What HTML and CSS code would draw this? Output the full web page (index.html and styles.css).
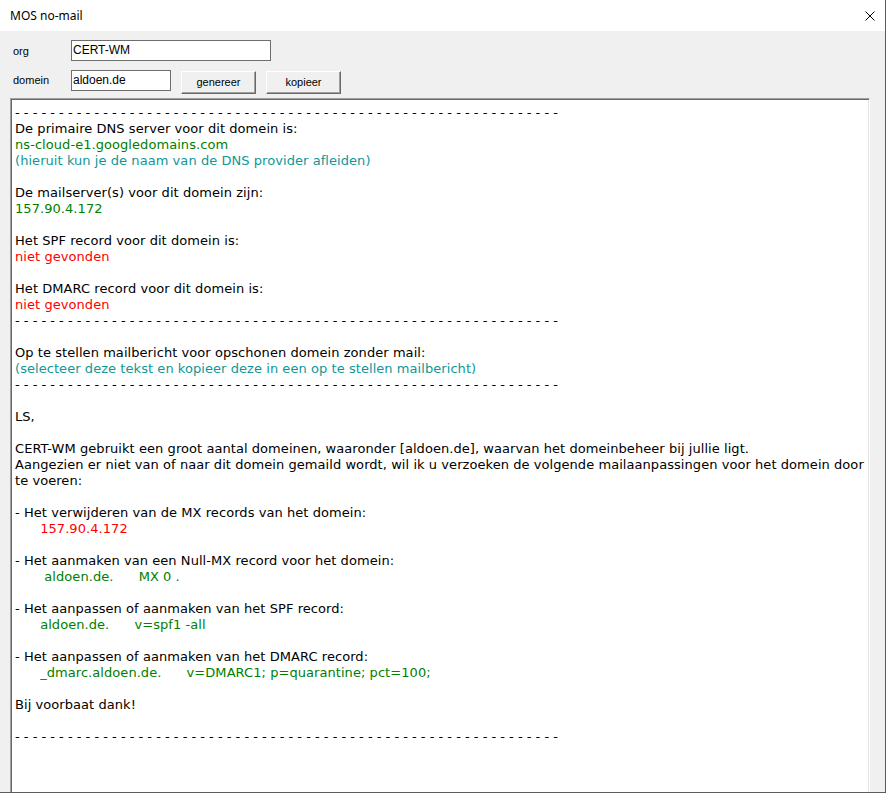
FILE: index.html
```html
<!DOCTYPE html>
<html lang="nl">
<head>
<meta charset="utf-8">
<title>MOS no-mail</title>
<link rel="stylesheet" href="styles.css">
</head>
<body>
<div class="window">
  <div class="titlebar">
    <span class="title">MOS no-mail</span>
    <svg class="close" width="10" height="10" viewBox="0 0 10 10"><path d="M0.5 0.5 L9.5 9.5 M9.5 0.5 L0.5 9.5" stroke="#000" stroke-width="1" fill="none"/></svg>
  </div>
  <div class="client">
    <div class="row row-org">
      <span class="label">org</span>
      <div class="field field-org">CERT-WM</div>
    </div>
    <div class="row row-dom">
      <span class="label">domein</span>
      <div class="field field-dom">aldoen.de</div>
      <button class="btn">genereer</button>
      <button class="btn">kopieer</button>
    </div>
    <div class="memo">
      <div class="l dash">- - - - - - - - - - - - - - - - - - - - - - - - - - - - - - - - - - - - - - - - - - - - - - - - - - - - - - - - - - - - - -</div>
      <div class="l">De primaire DNS server voor dit domein is:</div>
      <div class="l green">ns-cloud-e1.googledomains.com</div>
      <div class="l teal">(hieruit kun je de naam van de DNS provider afleiden)</div>
      <div class="l"></div>
      <div class="l">De mailserver(s) voor dit domein zijn:</div>
      <div class="l green">157.90.4.172</div>
      <div class="l"></div>
      <div class="l">Het SPF record voor dit domein is:</div>
      <div class="l red">niet gevonden</div>
      <div class="l"></div>
      <div class="l">Het DMARC record voor dit domein is:</div>
      <div class="l red">niet gevonden</div>
      <div class="l dash">- - - - - - - - - - - - - - - - - - - - - - - - - - - - - - - - - - - - - - - - - - - - - - - - - - - - - - - - - - - - - -</div>
      <div class="l"></div>
      <div class="l">Op te stellen mailbericht voor opschonen domein zonder mail:</div>
      <div class="l teal">(selecteer deze tekst en kopieer deze in een op te stellen mailbericht)</div>
      <div class="l dash">- - - - - - - - - - - - - - - - - - - - - - - - - - - - - - - - - - - - - - - - - - - - - - - - - - - - - - - - - - - - - -</div>
      <div class="l"></div>
      <div class="l">LS,</div>
      <div class="l"></div>
      <div class="l">CERT-WM gebruikt een groot aantal domeinen, waaronder [aldoen.de], waarvan het domeinbeheer bij jullie ligt.</div>
      <div class="l">Aangezien er niet van of naar dit domein gemaild wordt, wil ik u verzoeken de volgende mailaanpassingen voor het domein door</div>
      <div class="l">te voeren:</div>
      <div class="l"></div>
      <div class="l">- Het verwijderen van de MX records van het domein:</div>
      <div class="l red">      157.90.4.172</div>
      <div class="l"></div>
      <div class="l">- Het aanmaken van een Null-MX record voor het domein:</div>
      <div class="l green">       aldoen.de.      MX 0 .</div>
      <div class="l"></div>
      <div class="l">- Het aanpassen of aanmaken van het SPF record:</div>
      <div class="l green">      aldoen.de.      v=spf1 -all</div>
      <div class="l"></div>
      <div class="l">- Het aanpassen of aanmaken van het DMARC record:</div>
      <div class="l green">      _dmarc.aldoen.de.      v=DMARC1; p=quarantine; pct=100;</div>
      <div class="l"></div>
      <div class="l">Bij voorbaat dank!</div>
      <div class="l"></div>
      <div class="l dash">- - - - - - - - - - - - - - - - - - - - - - - - - - - - - - - - - - - - - - - - - - - - - - - - - - - - - - - - - - - - - -</div>
    </div>
  </div>
</div>
</body>
</html>
```
FILE: styles.css
```css
html, body {
  margin: 0;
  padding: 0;
  background: #f0f0f0;
}
.window {
  width: 886px;
  height: 793px;
  box-sizing: border-box;
  border-right: 1px solid #5c5c5c;
  border-bottom: 1px solid #5c5c5c;
  background: #f0f0f0;
  overflow: hidden;
  display: flex;
  flex-direction: column;
}
.titlebar {
  height: 31px;
  flex: none;
  background: #ffffff;
  display: flex;
  align-items: center;
  justify-content: space-between;
  padding: 0 10px 0 10px;
  font-family: "Noto Sans", "Open Sans", sans-serif;
  font-size: 12px;
  color: #000;
}
.title {
  line-height: 31px;
}
.close {
  display: block;
}
.client {
  flex: 1;
  display: flex;
  flex-direction: column;
  padding-top: 9px;
  font-family: "Liberation Sans", Arial, sans-serif;
  font-size: 11px;
  color: #000;
  min-height: 0;
}
.row {
  display: flex;
  align-items: flex-start;
  flex: none;
}
.row-org {
  height: 21px;
}
.row-dom {
  height: 24px;
  margin-top: 9px;
}
.label {
  width: 58px;
  padding-left: 13px;
  line-height: 21px;
  position: relative;
  top: 1px;
}
.row-dom .label {
  top: 0px;
}
.field {
  box-sizing: border-box;
  height: 21px;
  background: #fff;
  border: 1px solid #6e6e6e;
  padding: 0 0 0 1px;
  line-height: 18px;
  font-size: 12px;
  white-space: nowrap;
}
.field-org {
  width: 200px;
}
.field-dom {
  width: 100px;
}
.btn {
  box-sizing: border-box;
  width: 75px;
  height: 23px;
  margin: 1px 0 0 10px;
  padding: 0 0 1px 0;
  background: #f0f0f0;
  border: 1px solid;
  border-color: #ffffff #696969 #696969 #ffffff;
  box-shadow: inset -1px -1px 0 #a0a0a0;
  border-radius: 0;
  font-family: "Liberation Sans", Arial, sans-serif;
  font-size: 11px;
  color: #000;
}
.memo {
  flex: none;
  box-sizing: border-box;
  width: 860px;
  height: 720px;
  margin: 4px 0 0 10px;
  background: #ffffff;
  border: 1px solid;
  border-color: #a0a0a0 #ffffff #ffffff #a0a0a0;
  box-shadow: inset 1px 1px 0 #696969, inset -1px -1px 0 #e3e3e3;
  padding: 6px 0 0 4px;
  font-family: "DejaVu Sans", Verdana, sans-serif;
  font-size: 13px;
  line-height: 16px;
  color: #000;
  overflow: hidden;
}
.l {
  height: 16px;
  white-space: pre;
  letter-spacing: 0.06px;
}
.l.dash {
  letter-spacing: 0;
}
.green {
  color: #008000;
}
.teal {
  color: #0f9797;
}
.red {
  color: #ff0000;
}
```
